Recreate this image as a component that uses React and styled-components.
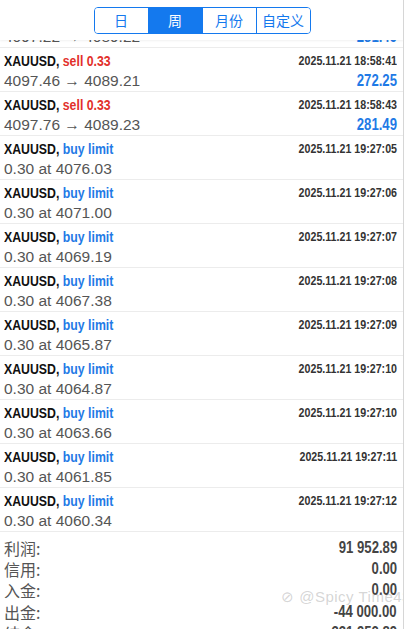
import React from "react";
import styled, { createGlobalStyle } from "styled-components";

const GlobalStyle = createGlobalStyle`
  html, body {
    margin: 0;
    padding: 0;
    background: #fff;
  }
  body {
    font-family: "Liberation Sans", Arial, sans-serif;
    -webkit-font-smoothing: antialiased;
  }
`;

// condensed bold, like the app's symbol / time font
const condensed = origin => `
  display: inline-block;
  font-family: "Liberation Sans", Arial, sans-serif;
  font-weight: bold;
  white-space: nowrap;
  transform: scaleX(0.82);
  transform-origin: ${origin} center;
`;

const Page = styled.div`
  position: relative;
  width: 404px;
  height: 629px;
  overflow: hidden;
  background: #fff;
  display: flex;
  flex-direction: column;
  border-right: 1px solid #d6d6d6;
  box-sizing: border-box;
`;

const Header = styled.div`
  height: 40px;
  display: flex;
  align-items: center;
  justify-content: center;
  background: #fff;
  flex-shrink: 0;
  box-shadow: 0 1px 2px rgba(0, 0, 0, 0.06);
  position: relative;
  z-index: 1;
`;

const Segments = styled.div`
  display: flex;
  height: 27px;
  margin-left: 1px;
  border: 1px solid #1479ee;
  border-radius: 4px;
  overflow: hidden;
  box-sizing: border-box;
`;

const Segment = styled.div`
  width: 53px;
  display: flex;
  align-items: center;
  justify-content: center;
  font-family: "Noto Sans CJK SC", sans-serif;
  font-size: 14px;
  line-height: 1;
  color: ${p => (p.active ? "#fff" : "#1479ee")};
  background: ${p => (p.active ? "#1479ee" : "#fff")};
  border-left: ${p => (p.first ? "none" : "1px solid #1479ee")};
`;

// bottom edge of the row scrolled under the header
const Peek = styled.div`
  height: 8px;
  overflow: hidden;
  display: flex;
  justify-content: space-between;
  align-items: flex-end;
  padding: 0 6px 0 4px;
  box-sizing: border-box;
  border-bottom: 1px solid #ececec;
  flex-shrink: 0;
  line-height: 20px;
`;

const Row = styled.div`
  height: 44px;
  box-sizing: border-box;
  padding: 2px 6px 0 4px;
  border-bottom: 1px solid #ececec;
  display: flex;
  flex-direction: column;
  flex-shrink: 0;
`;

const Line = styled.div`
  display: flex;
  justify-content: space-between;
  align-items: center;
  height: ${p => (p.top ? 20 : 21)}px;
`;

const Symbol = styled.span`
  ${condensed("left")}
  font-size: 15px;
  color: #111;
`;

const Side = styled.span`
  color: ${p => (p.sell ? "#e2302b" : "#1f7ae6")};
`;

const Time = styled.span`
  ${condensed("right")}
  font-size: 13px;
  color: #333;
`;

const Prices = styled.span`
  font-size: 15.5px;
  color: #555;
  white-space: nowrap;
`;

const Profit = styled.span`
  ${condensed("right")}
  font-size: 16px;
  color: #1f7ae6;
`;

const Summary = styled.div`
  padding: 5px 6px 0 4px;
  display: flex;
  flex-direction: column;
`;

const SumRow = styled.div`
  height: 21.3px;
  display: flex;
  justify-content: space-between;
  align-items: center;
  flex-shrink: 0;
  line-height: 1;
`;

const SumLabel = styled.span`
  font-family: "Noto Sans CJK SC", sans-serif;
  font-size: 16px;
  color: #555;
`;

const SumValue = styled.span`
  ${condensed("right")}
  font-size: 16px;
  color: #444;
`;

const Watermark = styled.div`
  position: absolute;
  left: 281px;
  top: 589px;
  font-size: 15px;
  line-height: 1;
  white-space: nowrap;
  color: rgba(150, 150, 150, 0.4);
  letter-spacing: 0.5px;
`;

const closed = [
  { open: "4097.46", close: "4089.21", time: "2025.11.21 18:58:41", profit: "272.25" },
  { open: "4097.76", close: "4089.23", time: "2025.11.21 18:58:43", profit: "281.49" }
];

const pending = [
  ["4076.03", "19:27:05"],
  ["4071.00", "19:27:06"],
  ["4069.19", "19:27:07"],
  ["4067.38", "19:27:08"],
  ["4065.87", "19:27:09"],
  ["4064.87", "19:27:10"],
  ["4063.66", "19:27:10"],
  ["4061.85", "19:27:11"],
  ["4060.34", "19:27:12"]
];

const totals = [
  ["利润:", "91 952.89"],
  ["信用:", "0.00"],
  ["入金:", "0.00"],
  ["出金:", "-44 000.00"],
  ["结余:", "331 952.89"]
];

const App = () => (
  <Page>
    <GlobalStyle />
    <Header>
      <Segments>
        <Segment first>日</Segment>
        <Segment active>周</Segment>
        <Segment>月份</Segment>
        <Segment>自定义</Segment>
      </Segments>
    </Header>
    <Peek>
      <Prices>4097.22 → 4089.22</Prices>
      <Profit>281.49</Profit>
    </Peek>
    {closed.map(row => (
      <Row key={row.time}>
        <Line top>
          <Symbol>
            XAUUSD, <Side sell>sell 0.33</Side>
          </Symbol>
          <Time>{row.time}</Time>
        </Line>
        <Line>
          <Prices>
            {row.open} → {row.close}
          </Prices>
          <Profit>{row.profit}</Profit>
        </Line>
      </Row>
    ))}
    {pending.map(([price, time]) => (
      <Row key={price}>
        <Line top>
          <Symbol>
            XAUUSD, <Side>buy limit</Side>
          </Symbol>
          <Time>2025.11.21 {time}</Time>
        </Line>
        <Line>
          <Prices>0.30 at {price}</Prices>
        </Line>
      </Row>
    ))}
    <Summary>
      {totals.map(([label, value]) => (
        <SumRow key={label}>
          <SumLabel>{label}</SumLabel>
          <SumValue>{value}</SumValue>
        </SumRow>
      ))}
    </Summary>
    <Watermark>⊘ @Spicy Time43</Watermark>
  </Page>
);

export default App;
